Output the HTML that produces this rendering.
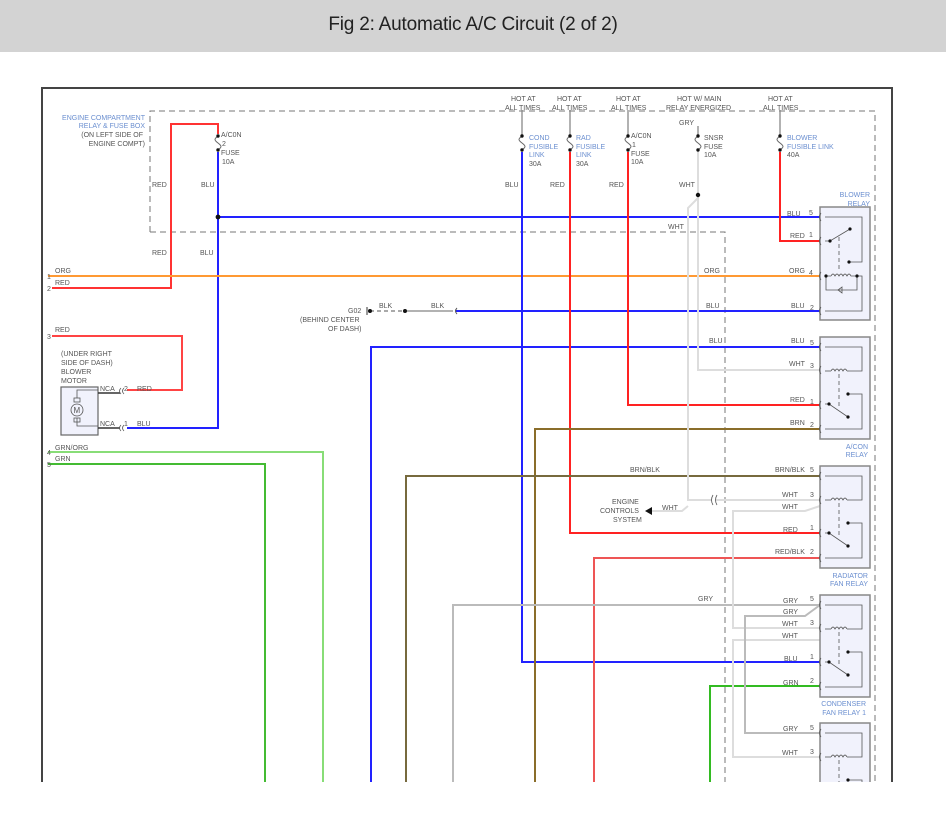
<!DOCTYPE html>
<html><head><meta charset="utf-8"><style>
html,body{margin:0;padding:0;background:#fff;width:946px;height:814px;overflow:hidden}
.hd{position:absolute;left:0;top:0;width:946px;height:52px;background:#d3d3d3;text-align:center;font:19px "Liberation Sans",sans-serif;line-height:50px;color:#222;letter-spacing:-0.2px}
svg{position:absolute;left:0;top:0}
text{font-family:"Liberation Sans",sans-serif;font-size:7px;fill:#555}
.b{fill:#6b8fd0}
</style></head><body>
<div class="hd">Fig 2: Automatic A/C Circuit (2 of 2)</div>
<svg width="946" height="814" viewBox="0 0 946 814">
<defs>
<g id="rl">
<rect x="820" y="0" width="50" height="102" fill="#f1f2fc" stroke="#888" stroke-width="1.5"/>
<g fill="none" stroke="#555" stroke-width="0.8">
<path d="M825 10H862V34H849"/>
<path d="M825 34H831"/>
<path d="M831 34q2 -4 4 0q2 -4 4 0q2 -4 4 0q2 -4 4 0"/>
<path d="M847 34H849"/>
<path d="M839 37V70" stroke-dasharray="4 3"/>
<path d="M825 67H829L848 80"/>
<path d="M848 57H862V92H825"/>
</g>
<circle cx="829" cy="67" r="1.6" fill="#111"/><circle cx="848" cy="80" r="1.6" fill="#111"/><circle cx="848" cy="57" r="1.6" fill="#111"/>
</g>
</defs>
<!-- frame -->
<path d="M42 782V88H892V782" fill="none" stroke="#444" stroke-width="2"/>
<!-- dashed boxes -->
<g fill="none" stroke="#777" stroke-width="1" stroke-dasharray="6 4">
<path d="M150 232V111H875V782"/>
<path d="M150 232H725V782"/>
</g>
<!-- hot at lines -->
<g stroke="#888" stroke-width="1.3" fill="none">
<path d="M522 110V136M570 110V136M628 110V136M698 126V136M780 110V136"/>
</g>
<!-- fuses -->
<g fill="none" stroke="#666" stroke-width="1">
<path d="M218 136c-4 3 -4 4 0 7s4 4 0 7"/>
<path d="M522 136c-4 3 -4 4 0 7s4 4 0 7"/>
<path d="M570 136c-4 3 -4 4 0 7s4 4 0 7"/>
<path d="M628 136c-4 3 -4 4 0 7s4 4 0 7"/>
<path d="M698 136c-4 3 -4 4 0 7s4 4 0 7"/>
<path d="M780 136c-4 3 -4 4 0 7s4 4 0 7"/>
</g>
<g fill="#111">
<circle cx="218" cy="136" r="1.7"/><circle cx="218" cy="150" r="1.7"/>
<circle cx="522" cy="136" r="1.7"/><circle cx="522" cy="150" r="1.7"/>
<circle cx="570" cy="136" r="1.7"/><circle cx="570" cy="150" r="1.7"/>
<circle cx="628" cy="136" r="1.7"/><circle cx="628" cy="150" r="1.7"/>
<circle cx="698" cy="136" r="1.7"/><circle cx="698" cy="150" r="1.7"/>
<circle cx="780" cy="136" r="1.7"/><circle cx="780" cy="150" r="1.7"/>
</g>
<!-- wires -->
<g fill="none" stroke-width="2">
<path d="M52 288H171V124H218V134" stroke="#f33"/>
<path d="M218 152V428H127" stroke="#22f"/>
<path d="M218 217H820" stroke="#22f"/>
<path d="M48 276H820" stroke="#f93"/>
<path d="M52 336H182V390H127" stroke="#f44"/>
<path d="M456 311H820" stroke="#22f"/>
<path d="M371 782V347H820" stroke="#22f"/>
<path d="M48 452H323V782" stroke="#8d7" />
<path d="M48 464H265V782" stroke="#4b3"/>
<path d="M522 152V662H820" stroke="#22f"/>
<path d="M570 152V533H820" stroke="#f22"/>
<path d="M628 152V405H820" stroke="#f22"/>
<path d="M780 152V241H820" stroke="#f22"/>
<path d="M535 782V429H820" stroke="#8a6d2a"/>
<path d="M406 782V476H820" stroke="#776a3e"/>
<path d="M594 782V558H820" stroke="#e55"/>
<path d="M453 782V605H820" stroke="#bbb"/>
<path d="M710 782V686H820" stroke="#3b2"/>
</g>
<g fill="none" stroke="#ddd" stroke-width="2">
<path d="M698 152V195"/>
<path d="M698 195V370H820"/>
<path d="M698 198L688 208V500H712"/>
<path d="M716 500H820"/>
<path d="M820 506L805 511H733V628H820"/>
<path d="M820 640L805 640H733V757H820"/>
<path d="M688 506L682 511H652"/>
</g>
<g fill="none" stroke="#bbb" stroke-width="2">
<path d="M820 605L805 616H745V733H820"/>
</g>
<circle cx="698" cy="195" r="2.2" fill="#111"/>
<circle cx="218" cy="217" r="2.4" fill="#111"/>
<path d="M645 511l7 -4v8z" fill="#111"/>
<path d="M713 495q-3 5 0 10M717 495q-3 5 0 10" fill="none" stroke="#555" stroke-width="0.8"/>
<!-- G02 -->
<path d="M370 311H405" stroke="#555" stroke-width="1" stroke-dasharray="4 3"/>
<path d="M405 311H453" stroke="#666" stroke-width="1"/>
<circle cx="370" cy="311" r="2" fill="#111"/><circle cx="405" cy="311" r="2" fill="#111"/>
<path d="M367 307v8" stroke="#333"/>
<path d="M457 308q-3 3 0 6" fill="none" stroke="#555"/>
<!-- motor -->
<rect x="61" y="387" width="37" height="48" fill="#f1f2fc" stroke="#666" stroke-width="1.2"/>
<g fill="none" stroke="#555" stroke-width="0.8">
<path d="M98 390H77V398M77 418V426H98"/>
<circle cx="77" cy="410" r="6"/>
<rect x="74" y="398" width="6" height="4"/><rect x="74" y="418" width="6" height="4"/>
</g>
<text x="73.5" y="413" style="font-size:8px">M</text>
<path d="M98 393H120M98 428H120" stroke="#333" stroke-width="1.5"/>
<path d="M121 388q-3 3 0 6M124 388q-3 3 0 6M121 425q-3 3 0 6M124 425q-3 3 0 6" fill="none" stroke="#555" stroke-width="0.8"/>
<!-- relays -->
<rect x="820" y="207" width="50" height="113" fill="#f1f2fc" stroke="#888" stroke-width="1.5"/>
<g fill="none" stroke="#555" stroke-width="0.8">
<path d="M825 217H862V262H849"/>
<path d="M825 241H830L850 229"/>
<path d="M839 237V270" stroke-dasharray="4 3"/>
<path d="M825 276H831M831 276q2-4 4 0q2-4 4 0q2-4 4 0q2-4 4 0q2-4 4 0H857V290H826V276"/>
<path d="M825 311H862V276H857"/>
<path d="M838 290l4-3v6z"/>
</g>
<g fill="#111"><circle cx="830" cy="241" r="1.6"/><circle cx="850" cy="229" r="1.6"/><circle cx="849" cy="262" r="1.6"/><circle cx="826" cy="276" r="1.6"/><circle cx="857" cy="276" r="1.6"/></g>
<use href="#rl" y="337"/>
<use href="#rl" y="466"/>
<use href="#rl" y="595"/>
<use href="#rl" y="723"/>
<rect x="810" y="782" width="80" height="40" fill="#fff"/>
<!-- pin connectors -->
<g fill="none" stroke="#555" stroke-width="0.8">
<path d="M821 213q-3 4 0 8M821 237q-3 4 0 8M821 272q-3 4 0 8M821 307q-3 4 0 8M821 343q-3 4 0 8M821 366q-3 4 0 8M821 401q-3 4 0 8M821 425q-3 4 0 8M821 472q-3 4 0 8M821 496q-3 4 0 8M821 529q-3 4 0 8M821 554q-3 4 0 8M821 601q-3 4 0 8M821 624q-3 4 0 8M821 658q-3 4 0 8M821 682q-3 4 0 8M821 729q-3 4 0 8M821 753q-3 4 0 8"/>
</g>
<!-- labels -->
<g>
<text class="b" x="145" y="120" text-anchor="end">ENGINE COMPARTMENT</text>
<text class="b" x="145" y="128" text-anchor="end">RELAY &amp; FUSE BOX</text>
<text x="143" y="137" text-anchor="end">(ON LEFT SIDE OF</text>
<text x="145" y="146" text-anchor="end">ENGINE COMPT)</text>
<text x="221" y="137">A/C0N</text><text x="222" y="146">2</text><text x="221" y="155">FUSE</text><text x="222" y="164">10A</text>
<text x="152" y="187">RED</text><text x="201" y="187">BLU</text>
<text x="152" y="255">RED</text><text x="200" y="255">BLU</text>
<text x="47" y="279">1</text><text x="55" y="273">ORG</text>
<text x="47" y="291">2</text><text x="55" y="285">RED</text>
<text x="47" y="339">3</text><text x="55" y="332">RED</text>
<text x="61" y="356">(UNDER RIGHT</text><text x="61" y="365">SIDE OF DASH)</text><text x="61" y="374">BLOWER</text><text x="61" y="383">MOTOR</text>
<text x="100" y="391">NCA</text><text x="124" y="391">2</text><text x="137" y="391">RED</text>
<text x="100" y="426">NCA</text><text x="124" y="426">1</text><text x="137" y="426">BLU</text>
<text x="348" y="313">G02</text><text x="379" y="308">BLK</text><text x="431" y="308">BLK</text>
<text x="300" y="322">(BEHIND CENTER</text><text x="328" y="331">OF DASH)</text>
<text x="47" y="455">4</text><text x="55" y="450">GRN/ORG</text>
<text x="47" y="467">5</text><text x="55" y="461">GRN</text>
<text x="511" y="101">HOT AT</text><text x="505" y="110">ALL TIMES</text>
<text x="557" y="101">HOT AT</text><text x="552" y="110">ALL TIMES</text>
<text x="616" y="101">HOT AT</text><text x="611" y="110">ALL TIMES</text>
<text x="677" y="101">HOT W/ MAIN</text><text x="666" y="110">RELAY ENERGIZED</text>
<text x="768" y="101">HOT AT</text><text x="763" y="110">ALL TIMES</text>
<text x="679" y="125">GRY</text>
<text class="b" x="529" y="140">COND</text><text class="b" x="529" y="149">FUSIBLE</text><text class="b" x="529" y="157">LINK</text><text x="529" y="166">30A</text>
<text class="b" x="576" y="140">RAD</text><text class="b" x="576" y="149">FUSIBLE</text><text class="b" x="576" y="157">LINK</text><text x="576" y="166">30A</text>
<text x="631" y="138">A/C0N</text><text x="632" y="147">1</text><text x="631" y="156">FUSE</text><text x="631" y="164">10A</text>
<text x="704" y="140">SNSR</text><text x="704" y="149">FUSE</text><text x="704" y="157">10A</text>
<text class="b" x="787" y="140">BLOWER</text><text class="b" x="787" y="149">FUSIBLE LINK</text><text x="787" y="157">40A</text>
<text x="505" y="187">BLU</text><text x="550" y="187">RED</text><text x="609" y="187">RED</text><text x="679" y="187">WHT</text>
<text class="b" x="870" y="197" text-anchor="end">BLOWER</text><text class="b" x="870" y="206" text-anchor="end">RELAY</text>
<text x="668" y="229">WHT</text>
<text x="787" y="216">BLU</text><text x="809" y="215">5</text>
<text x="790" y="238">RED</text><text x="809" y="237">1</text>
<text x="704" y="273">ORG</text><text x="789" y="273">ORG</text><text x="809" y="275">4</text>
<text x="706" y="308">BLU</text><text x="791" y="308">BLU</text><text x="810" y="310">2</text>
<text x="709" y="343">BLU</text><text x="791" y="343">BLU</text><text x="810" y="345">5</text>
<text x="789" y="366">WHT</text><text x="810" y="368">3</text>
<text x="790" y="402">RED</text><text x="810" y="404">1</text>
<text x="790" y="425">BRN</text><text x="810" y="427">2</text>
<text class="b" x="868" y="449" text-anchor="end">A/CON</text><text class="b" x="868" y="457" text-anchor="end">RELAY</text>
<text x="630" y="472">BRN/BLK</text><text x="775" y="472">BRN/BLK</text><text x="810" y="472">5</text>
<text x="782" y="497">WHT</text><text x="810" y="497">3</text>
<text x="782" y="509">WHT</text>
<text x="612" y="504">ENGINE</text><text x="600" y="513">CONTROLS</text><text x="613" y="522">SYSTEM</text>
<text x="662" y="510">WHT</text>
<text x="783" y="532">RED</text><text x="810" y="530">1</text>
<text x="775" y="554">RED/BLK</text><text x="810" y="554">2</text>
<text class="b" x="868" y="578" text-anchor="end">RADIATOR</text><text class="b" x="868" y="586" text-anchor="end">FAN RELAY</text>
<text x="698" y="601">GRY</text><text x="783" y="603">GRY</text><text x="810" y="601">5</text>
<text x="783" y="614">GRY</text>
<text x="782" y="626">WHT</text><text x="810" y="625">3</text>
<text x="782" y="638">WHT</text>
<text x="784" y="661">BLU</text><text x="810" y="659">1</text>
<text x="783" y="685">GRN</text><text x="810" y="683">2</text>
<text class="b" x="866" y="706" text-anchor="end">CONDENSER</text><text class="b" x="866" y="715" text-anchor="end">FAN RELAY 1</text>
<text x="783" y="731">GRY</text><text x="810" y="730">5</text>
<text x="782" y="755">WHT</text><text x="810" y="754">3</text>
</g>
</svg>
</body></html>
